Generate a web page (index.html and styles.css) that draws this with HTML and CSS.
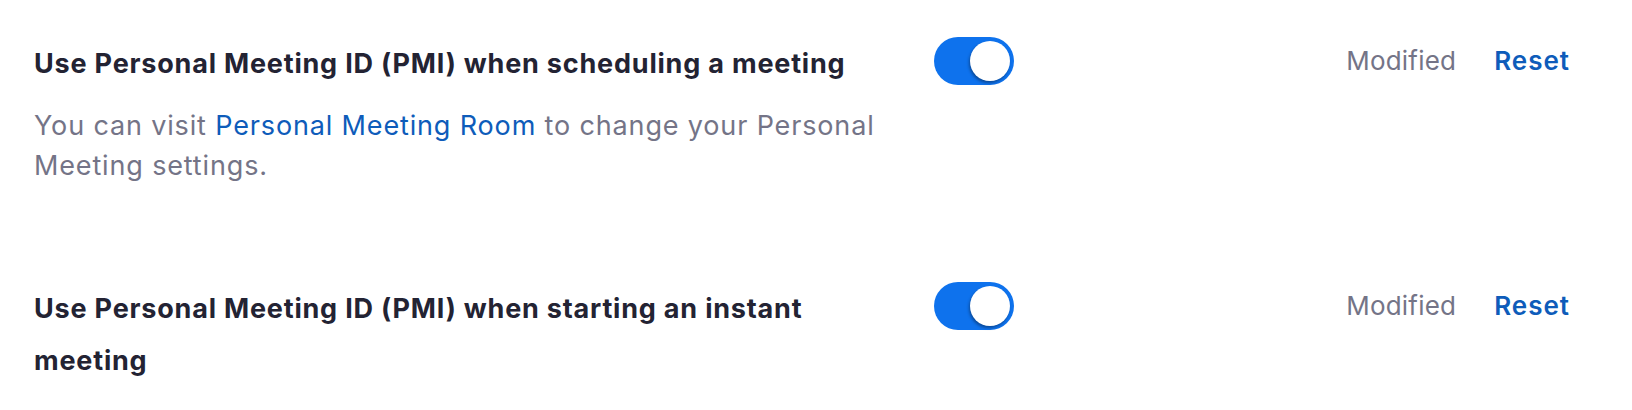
FILE: index.html
```html
<!DOCTYPE html>
<html lang="en">
<head>
<meta charset="utf-8">
<title>Settings</title>
<link rel="stylesheet" href="styles.css">
</head>
<body>
<div class="settings">
  <div class="row">
    <div class="text-col">
      <div class="title">Use Personal Meeting ID (PMI) when scheduling a meeting</div>
      <p class="desc">You can visit <a class="link" href="#">Personal Meeting Room</a> to change your Personal Meeting settings.</p>
    </div>
    <div class="toggle"><span class="knob"></span></div>
    <div class="status">
      <span class="modified">Modified</span>
      <a class="reset" href="#">Reset</a>
    </div>
  </div>
  <div class="row">
    <div class="text-col">
      <div class="title">Use Personal Meeting ID (PMI) when starting an instant meeting</div>
    </div>
    <div class="toggle"><span class="knob"></span></div>
    <div class="status">
      <span class="modified">Modified</span>
      <a class="reset" href="#">Reset</a>
    </div>
  </div>
</div>
</body>
</html>
```
FILE: styles.css
```css
html, body {
  margin: 0;
  padding: 0;
  background: #ffffff;
}

body {
  font-family: Inter, "Noto Sans", "Liberation Sans", sans-serif;
  font-size: 26px;
  color: #232333;
}

.settings {
  display: flex;
  flex-direction: column;
  gap: 96px;
  padding: 37px 62px 0 34px;
}

.row {
  display: flex;
  align-items: flex-start;
}

.text-col {
  width: 860px;
  flex: 0 0 860px;
  padding-top: 1px;
}

.title {
  font-size: 27px;
  font-weight: 700;
  letter-spacing: 0.8px;
  line-height: 52px;
  color: #232333;
}

.desc {
  margin: 16px 0 0;
  font-size: 27px;
  letter-spacing: 0.85px;
  line-height: 40px;
  color: #747487;
}

.link {
  color: #0e5cba;
  text-decoration: none;
}

.toggle {
  flex: 0 0 auto;
  margin-left: 40px;
  width: 80px;
  height: 48px;
  border-radius: 24px;
  background: #0e72ed;
  display: flex;
  align-items: center;
  justify-content: flex-end;
  padding-right: 4px;
  box-sizing: border-box;
}

.knob {
  width: 40px;
  height: 40px;
  border-radius: 50%;
  background: #ffffff;
  box-shadow: -1px 2px 3px rgba(0, 0, 0, 0.35);
}

.status {
  margin-left: auto;
  display: flex;
  align-items: center;
  gap: 38px;
  line-height: 48px;
}

.modified {
  color: #747487;
  letter-spacing: 0.2px;
}

.reset {
  color: #0e5cba;
  font-weight: 600;
  letter-spacing: 1px;
  text-decoration: none;
}
```
